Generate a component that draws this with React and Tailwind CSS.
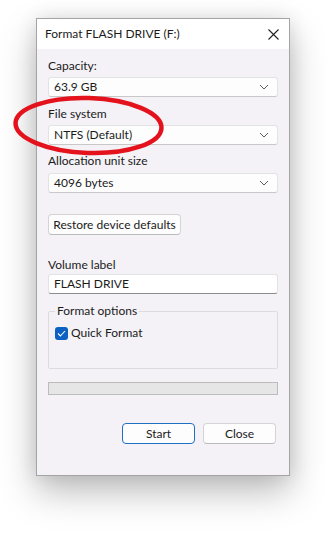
import React from 'react';

const font = { fontFamily: 'Lato, "Noto Sans", sans-serif' };

const Chevron = () => (
  <svg width="10" height="6" viewBox="0 0 10 6" className="shrink-0">
    <path d="M1 1 L5 5 L9 1" fill="none" stroke="#5c5c5c" strokeWidth="1" />
  </svg>
);

const Select = ({ value, className = '' }) => (
  <div className={`h-[20px] w-[230px] flex items-center justify-between pl-[5px] pr-[8px] bg-[#fdfdfd] border border-[#e3e3e3] border-b-[#c8c8c8] rounded-[3px] ${className}`}>
    <span>{value}</span>
    <Chevron />
  </div>
);

const Button = ({ children, primary, className = '' }) => (
  <div
    className={`h-[21px] flex items-center justify-center rounded-[4px] bg-[#fdfdfd] ${
      primary ? 'border border-[#1f6fc5]' : 'border border-[#d4d4d4] border-b-[#bababa]'
    } ${className}`}
  >
    {children}
  </div>
);

export default function App() {
  return (
    <div className="relative w-[326px] h-[543px] bg-white overflow-hidden text-[12px] text-[#1b1b1b]" style={font}>
      <div className="pl-[36px] pt-[18px]">
        <div className="w-[254px] h-[458px] border border-[#a4a4a4] bg-[#f4f2f6] shadow-[0_16px_34px_rgba(0,0,0,0.26),0_0_18px_rgba(0,0,0,0.10)] flex flex-col">
          {/* title bar */}
          <div className="h-[30px] bg-white flex items-center justify-between pl-[8px] pr-[10px]">
            <span className="text-[12px]">Format FLASH DRIVE (F:)</span>
            <svg width="11" height="11" viewBox="0 0 11 11">
              <path d="M0.5 0.5 L10.5 10.5 M10.5 0.5 L0.5 10.5" stroke="#222" strokeWidth="1.1" />
            </svg>
          </div>

          <div className="flex flex-col pl-[11px] leading-[16px]">
            <div className="mt-[9px]">Capacity:</div>
            <Select value="63.9 GB" className="mt-[3px]" />

            <div className="mt-[9px]">File system</div>
            <Select value="NTFS (Default)" className="mt-[3px]" />

            <div className="mt-[8px]">Allocation unit size</div>
            <Select value="4096 bytes" className="mt-[4px]" />

            <Button className="w-[133px] mt-[21px]">Restore device defaults</Button>

            <div className="mt-[22px]">Volume label</div>
            <div className="mt-[1px] h-[20px] w-[230px] flex items-center pl-[5px] bg-white border border-[#e3e3e3] border-b-[#8d8d8d] rounded-[3px]">
              FLASH DRIVE
            </div>

            {/* group box */}
            <div className="relative mt-[17px] w-[230px] h-[58px] border border-[#dcdcdc] rounded-[2px]">
              <div className="absolute -top-[9px] left-[6px] px-[2px] bg-[#f4f2f6]">Format options</div>
              <div className="flex items-center gap-[3px] mt-[13px] ml-[6px]">
                <div className="w-[13px] h-[13px] rounded-[3px] bg-[#0c61c2] flex items-center justify-center">
                  <svg width="9" height="7" viewBox="0 0 9 7">
                    <path d="M1 3.5 L3.4 6 L8 1" fill="none" stroke="#fff" strokeWidth="1.1" />
                  </svg>
                </div>
                <span>Quick Format</span>
              </div>
            </div>

            {/* progress bar */}
            <div className="mt-[13px] w-[230px] h-[13px] bg-[#e6e6e6] border border-[#bcbcbc]" />

            <div className="flex gap-[8px] mt-[28px] ml-[74px]">
              <Button primary className="w-[73px]">Start</Button>
              <Button className="w-[73px]">Close</Button>
            </div>
          </div>
        </div>
      </div>

      {/* red annotation */}
      <svg className="absolute left-0 top-0 pointer-events-none" width="326" height="543">
        <ellipse cx="88.5" cy="125.5" rx="73" ry="27.5" fill="none" stroke="#e3121c" strokeWidth="4.5" transform="rotate(2 88.5 125.5)" />
      </svg>
    </div>
  );
}
